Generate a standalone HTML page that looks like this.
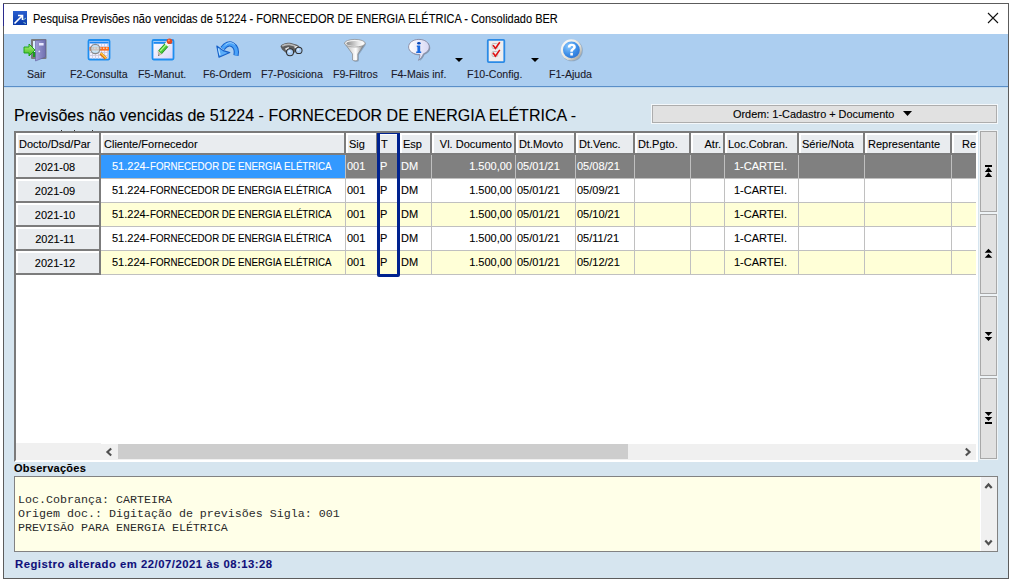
<!DOCTYPE html><html><head><meta charset="utf-8"><style>
*{margin:0;padding:0;box-sizing:border-box}
html,body{width:1012px;height:583px;overflow:hidden;background:#fff;font-family:"Liberation Sans",sans-serif;}
.a{position:absolute}
.t{position:absolute;white-space:nowrap;font-size:11px;line-height:13px;color:#000;-webkit-text-stroke:0.1px currentColor}
</style></head><body>

<div class="a" style="left:3px;top:3px;width:1006px;height:576px;border:1px solid #5c5c5c;background:#d6e5ef"></div>
<div class="a" style="left:3px;top:4px;width:1px;height:22px;background:#2b2b8c"></div>
<div class="a" style="left:4px;top:4px;width:1004px;height:30px;background:#fff"></div>
<div class="a" style="left:13px;top:11px;width:14px;height:14px;background:linear-gradient(#2a5fd0,#0a3aa8)"></div>
<svg class="a" style="left:13px;top:11px" width="14" height="14"><path d="M1.5 12.5 L9 5 M5 4.5 H9.5 V9" stroke="#fff" stroke-width="1.6" fill="none"/><path d="M10 9 l3 -2 M10.5 11.5 l2.5 1" stroke="#9cc" stroke-width="1"/></svg>
<div class="t" style="left:33px;top:13px;font-size:12px;color:#000;transform:scaleX(0.917);transform-origin:0 0">Pesquisa Previsões não vencidas de 51224 - FORNECEDOR DE ENERGIA ELÉTRICA - Consolidado BER</div>
<svg class="a" style="left:987px;top:12px" width="12" height="12"><path d="M1 1 L11 11 M11 1 L1 11" stroke="#111" stroke-width="1.1"/></svg>
<div class="a" style="left:4px;top:34px;width:1004px;height:52px;background:#accef0"></div>
<div class="a" style="left:4px;top:86px;width:1004px;height:1px;background:#5a8fc8"></div>
<div class="a" style="left:4px;top:87px;width:1004px;height:1px;background:#c4daec"></div>
<div class="t" style="left:27px;top:68px;font-size:10.6px;color:#1a1a2a">Sair</div>
<div class="t" style="left:70px;top:68px;font-size:10.6px;color:#1a1a2a">F2-Consulta</div>
<div class="t" style="left:138px;top:68px;font-size:10.6px;color:#1a1a2a">F5-Manut.</div>
<div class="t" style="left:203px;top:68px;font-size:10.6px;color:#1a1a2a">F6-Ordem</div>
<div class="t" style="left:261px;top:68px;font-size:10.6px;color:#1a1a2a">F7-Posiciona</div>
<div class="t" style="left:333px;top:68px;font-size:10.6px;color:#1a1a2a">F9-Filtros</div>
<div class="t" style="left:391px;top:68px;font-size:10.6px;color:#1a1a2a">F4-Mais inf.</div>
<div class="t" style="left:467px;top:68px;font-size:10.6px;color:#1a1a2a">F10-Config.</div>
<div class="t" style="left:549px;top:68px;font-size:10.6px;color:#1a1a2a">F1-Ajuda</div>
<svg class="a" style="left:20px;top:36px" width="30" height="28" viewBox="0 0 30 28">
<defs><linearGradient id="dg" x1="0" x2="1"><stop offset="0" stop-color="#9e9ed8"/><stop offset="1" stop-color="#7070b0"/></linearGradient>
<linearGradient id="ag" x1="0" x2="0" y1="0" y2="1"><stop offset="0" stop-color="#b4f27a"/><stop offset="1" stop-color="#3cb81e"/></linearGradient></defs>
<rect x="11" y="3" width="15.5" height="20" rx="1" fill="#7a7a7a"/>
<rect x="13" y="5" width="3" height="16" fill="#d8f0ff"/>
<rect x="13" y="16" width="3" height="5" fill="#1a9a20"/>
<path d="M15.5 4.6 L25.5 3.8 V21 L15.5 25 Z" fill="url(#dg)" stroke="#6060a0" stroke-width="0.6"/>
<rect x="19" y="7" width="4.6" height="2.5" fill="#e8e8ff"/>
<circle cx="19.3" cy="15.4" r="0.9" fill="#e0e0f0"/>
<path d="M4 11 H9 V8 L15 14 L9 20 V17 H4 Z" fill="url(#ag)" stroke="#12a012" stroke-width="0.9"/>
</svg>
<svg class="a" style="left:85px;top:36px" width="30" height="28" viewBox="0 0 30 28">
<rect x="3.5" y="4" width="21" height="19.5" rx="1.2" fill="#f4f0ff" stroke="#1e8ef0" stroke-width="1.8"/>
<rect x="4.5" y="5.5" width="19" height="2" fill="#1e88f0"/>
<path d="M4.5 10.5 H24 M4.5 13.5 H24 M4.5 16.5 H24 M4.5 19.5 H24 M7.5 8 V23 M10.5 8 V23 M13.5 8 V23 M16.5 8 V23 M19.5 8 V23 M22.5 8 V23" stroke="#c8c8dc" stroke-width="0.8"/>
<rect x="4.5" y="11" width="19.5" height="3.6" fill="#ff6a1a"/>
<path d="M6 12.2 h1.5 M9 12.2 h1.5 M12 12.2 h1.5 M15 12.2 h1.5 M18 12.2 h1.5 M21 12.2 h1.5" stroke="#ffd0a0" stroke-width="1.5"/>
<circle cx="10.3" cy="13" r="4.6" fill="#bfe4f8" fill-opacity="0.75" stroke="#8a8a8a" stroke-width="1.1"/>
<path d="M15.5 17.3 L21 22.6" stroke="#e07010" stroke-width="3"/>
<path d="M15.8 17 L21.2 22.2" stroke="#ffd040" stroke-width="1.2"/>
</svg>
<svg class="a" style="left:149px;top:36px" width="30" height="28" viewBox="0 0 30 28">
<defs><linearGradient id="wg" x1="0" x2="1" y1="0" y2="1"><stop offset="0" stop-color="#ffffff"/><stop offset="1" stop-color="#d8d4f8"/></linearGradient>
<linearGradient id="pg" x1="0" x2="1" y1="0" y2="0"><stop offset="0" stop-color="#2aa02a"/><stop offset="0.5" stop-color="#90f060"/><stop offset="1" stop-color="#2a9a2a"/></linearGradient></defs>
<rect x="3.5" y="4" width="21" height="19.5" rx="1.2" fill="url(#wg)" stroke="#1e8ef0" stroke-width="1.8"/>
<rect x="4.5" y="5.6" width="19" height="2.2" fill="#1e88f0"/>
<path d="M11 16.3 L18.8 7.6" stroke="#1f8a1f" stroke-width="5"/>
<path d="M11 16.3 L18.8 7.6" stroke="#4cc83a" stroke-width="3.6"/>
<path d="M11.2 15.2 L18.2 7.4" stroke="#b0ff90" stroke-width="1.2"/>
<path d="M8.6 14.8 L12.8 18.4 L9.3 19.9 Z" fill="#c8b8a0"/>
<path d="M9.1 18.6 L9.3 19.9 L10.5 19.3 Z" fill="#505050"/>
<path d="M17.4 9.4 L20.2 6.3" stroke="#f4f4f4" stroke-width="5"/>
<circle cx="20.5" cy="5.3" r="2.8" fill="#e24a22"/>
<circle cx="19.9" cy="4.6" r="1" fill="#ff9060"/>
</svg>
<svg class="a" style="left:213px;top:36px" width="30" height="28" viewBox="0 0 30 28">
<path d="M23 19.5 C25 9 16 3.5 9.5 12.5" stroke="#1660c8" stroke-width="5.2" fill="none"/>
<path d="M23 19.5 C25 9 16 3.5 9.5 12.5" stroke="#4aa2f8" stroke-width="3.2" fill="none"/>
<path d="M21.5 8.5 C19 6 15 6 12 9.5" stroke="#a8d8ff" stroke-width="1" fill="none"/>
<path d="M3.8 10 L10.2 14.6 L16.8 16.6 L6 21.2 Z" fill="#5aacf8" stroke="#1660c8" stroke-width="1.1" stroke-linejoin="round"/>
<path d="M5.5 12.5 L7 19" stroke="#b8e0ff" stroke-width="1.2"/>
</svg>
<svg class="a" style="left:277px;top:36px" width="30" height="28" viewBox="0 0 30 28">
<path d="M3.5 10.5 C4.5 7.5 10 6.5 13 6.8 L20 8.8 C22.5 10 23.5 12 22.5 14 L12 19.5 L5 13.5 Z" fill="#5c5c5c"/>
<path d="M5.2 10.2 C7 8.8 10 8.2 12.5 8.4 L18.5 10" stroke="#b8b8b8" stroke-width="1.6" fill="none"/>
<path d="M8.5 13.5 L12 11.8 M17.5 11.5 L20.5 10.8" stroke="#e8e8e8" stroke-width="2"/>
<circle cx="13" cy="16.2" r="4" fill="#303030"/>
<circle cx="21.8" cy="14.4" r="3.7" fill="#303030"/>
<circle cx="13" cy="16.2" r="3" fill="#a8ccf4"/>
<circle cx="21.8" cy="14.4" r="2.7" fill="#a8ccf4"/>
<circle cx="12.4" cy="15.4" r="1.2" fill="#e0f0ff"/>
<circle cx="21.2" cy="13.7" r="1.1" fill="#e0f0ff"/>
</svg>
<svg class="a" style="left:341px;top:36px" width="30" height="28" viewBox="0 0 30 28">
<defs><linearGradient id="fg" x1="0" x2="1"><stop offset="0" stop-color="#b0b0b0"/><stop offset="0.55" stop-color="#ffffff"/><stop offset="1" stop-color="#6a6a6a"/></linearGradient>
<linearGradient id="fi" x1="0" x2="1"><stop offset="0" stop-color="#8a8a8a"/><stop offset="0.7" stop-color="#e8e8e8"/><stop offset="1" stop-color="#ffffff"/></linearGradient></defs>
<path d="M4.5 8.2 L12.5 19 V25 C13.5 26 17 26 17.8 25 V19 L25.2 8.2 Z" fill="#000" fill-opacity="0.2"/>
<path d="M3.5 7.2 L11.5 18 V24 C12.5 25 16 25 16.8 24 V18 L24.2 7.2 Z" fill="url(#fg)" stroke="#7a7a7a" stroke-width="0.6"/>
<ellipse cx="13.9" cy="7.2" rx="10.3" ry="3.8" fill="#f4f4f4" stroke="#8a8a8a" stroke-width="0.7"/>
<ellipse cx="13.9" cy="7.5" rx="8.6" ry="2.6" fill="url(#fi)"/>
</svg>
<svg class="a" style="left:405px;top:36px" width="30" height="28" viewBox="0 0 30 28">
<defs><linearGradient id="bg2" x1="0" x2="1"><stop offset="0" stop-color="#ffffff"/><stop offset="1" stop-color="#d8d8f4"/></linearGradient></defs>
<path transform="translate(1,1)" fill="#000" fill-opacity="0.25" d="M13.9 3.4 C20 3.4 24.3 6.8 24.3 11 C24.3 14 22 16.5 18.5 17.8 C17.5 20 16 22.5 13.5 24.3 C14.5 22 15 20 14.8 18.5 C8 18.6 3.6 15 3.6 11 C3.6 6.8 8 3.4 13.9 3.4 Z"/>
<path d="M13.9 3.4 C20 3.4 24.3 6.8 24.3 11 C24.3 14 22 16.5 18.5 17.8 C17.5 20 16 22.5 13.5 24.3 C14.5 22 15 20 14.8 18.5 C8 18.6 3.6 15 3.6 11 C3.6 6.8 8 3.4 13.9 3.4 Z" fill="url(#bg2)" stroke="#8888a0" stroke-width="0.9"/>
<ellipse cx="13.9" cy="7.2" rx="1.8" ry="1.2" fill="#0a4ab8"/>
<path d="M11.8 9.6 H15.2 V15.6 H16.2 V17 H11.2 V15.6 H12.4 V11 H11.8 Z" fill="#1a6ae0"/>
</svg>
<svg class="a" style="left:482px;top:36px" width="30" height="28" viewBox="0 0 30 28">
<rect x="5.8" y="3.8" width="16.5" height="22.3" rx="1" fill="#f0eeee" stroke="#2a8ae6" stroke-width="1.8"/>
<rect x="10.2" y="7.5" width="5.5" height="5" rx="1" fill="none" stroke="#b8b8b8" stroke-width="0.9"/>
<rect x="10.2" y="15.5" width="5.5" height="5" rx="1" fill="none" stroke="#b8b8b8" stroke-width="0.9"/>
<path d="M11 9.1 L13.4 12.4 L17.8 6.2" stroke="#e01010" stroke-width="1.6" fill="none"/>
<path d="M11 16.8 L13.4 20.2 L17.8 13.9" stroke="#e01010" stroke-width="1.6" fill="none"/>
</svg>
<svg class="a" style="left:557px;top:36px" width="30" height="28" viewBox="0 0 30 28">
<defs><radialGradient id="hg" cx="0.35" cy="0.3" r="0.8"><stop offset="0" stop-color="#8ccaff"/><stop offset="0.6" stop-color="#3c8ee8"/><stop offset="1" stop-color="#2a70d0"/></radialGradient>
<linearGradient id="rg" x1="0" y1="0" x2="1" y2="1"><stop offset="0" stop-color="#ffffff"/><stop offset="0.6" stop-color="#e4e2da"/><stop offset="1" stop-color="#8a8a86"/></linearGradient></defs>
<circle cx="15" cy="14.5" r="10.8" fill="#000" fill-opacity="0.18"/>
<circle cx="14.4" cy="13.9" r="10.6" fill="url(#rg)"/>
<circle cx="14.4" cy="13.9" r="8.4" fill="url(#hg)"/>
<path d="M10.8 11.4 C10.8 8.6 12.8 7.8 14.8 7.8 C17 7.8 18.8 9 18.8 11 C18.8 13.4 16 13.6 15.8 15.8 H13.3 C13.2 12.6 16.2 12.4 16.2 11.1 C16.2 10.3 15.6 9.9 14.8 9.9 C13.9 9.9 13.4 10.5 13.4 11.4 Z" fill="#fff"/>
<rect x="13.3" y="16.8" width="2.6" height="2.7" fill="#fff"/>
</svg>
<svg class="a" style="left:455px;top:58px" width="8" height="4"><path d="M0 0 H8 L4 4 Z" fill="#000"/></svg>
<svg class="a" style="left:531px;top:58px" width="8" height="4"><path d="M0 0 H8 L4 4 Z" fill="#000"/></svg>
<div class="t" style="left:14px;top:106px;font-size:16px;line-height:19px;color:#000">Previsões não vencidas de 51224 - FORNECEDOR DE ENERGIA ELÉTRICA -</div>
<div class="a" style="left:61px;top:130px;width:1px;height:1px;background:#333"></div>
<div class="a" style="left:74px;top:130px;width:1px;height:1px;background:#333"></div>
<div class="a" style="left:92px;top:130px;width:1px;height:1px;background:#333"></div>
<div class="a" style="left:651px;top:104px;width:347px;height:20px;border:1px solid #f4f8fb;"></div>
<div class="a" style="left:652px;top:105px;width:345px;height:18px;border:1px solid #adadad;background:#e1e1e1"></div>
<div class="t" style="left:733px;top:108px;font-size:10.9px;color:#000">Ordem: 1-Cadastro + Documento</div>
<svg class="a" style="left:903px;top:111px" width="9" height="5"><path d="M0 0 H9 L4.5 5 Z" fill="#000"/></svg>
<div class="a" style="left:14px;top:131px;width:964px;height:331px;background:#fff;border-top:2px solid #7a7a7a;border-left:2px solid #7a7a7a;border-right:2px solid #fff;border-bottom:2px solid #fff;overflow:hidden">
<div class="a" style="left:0px;top:0px;width:85px;height:22px;background:#e9ecef"></div>
<div class="a" style="left:0px;top:0px;width:83px;height:2px;background:#fff"></div>
<div class="a" style="left:0px;top:0px;width:2px;height:20px;background:#fff"></div>
<div class="a" style="left:83px;top:0px;width:2px;height:22px;background:#7c7c7c"></div>
<div class="a" style="left:85px;top:0px;width:245px;height:22px;background:#e9ecef"></div>
<div class="a" style="left:85px;top:0px;width:243px;height:2px;background:#fff"></div>
<div class="a" style="left:85px;top:0px;width:2px;height:20px;background:#fff"></div>
<div class="a" style="left:328px;top:0px;width:2px;height:22px;background:#7c7c7c"></div>
<div class="a" style="left:330px;top:0px;width:32px;height:22px;background:#e9ecef"></div>
<div class="a" style="left:330px;top:0px;width:30px;height:2px;background:#fff"></div>
<div class="a" style="left:330px;top:0px;width:2px;height:20px;background:#fff"></div>
<div class="a" style="left:360px;top:0px;width:2px;height:22px;background:#7c7c7c"></div>
<div class="a" style="left:362px;top:0px;width:22px;height:22px;background:#e9ecef"></div>
<div class="a" style="left:362px;top:0px;width:20px;height:2px;background:#fff"></div>
<div class="a" style="left:362px;top:0px;width:2px;height:20px;background:#fff"></div>
<div class="a" style="left:382px;top:0px;width:2px;height:22px;background:#7c7c7c"></div>
<div class="a" style="left:384px;top:0px;width:32px;height:22px;background:#e9ecef"></div>
<div class="a" style="left:384px;top:0px;width:30px;height:2px;background:#fff"></div>
<div class="a" style="left:384px;top:0px;width:2px;height:20px;background:#fff"></div>
<div class="a" style="left:414px;top:0px;width:2px;height:22px;background:#7c7c7c"></div>
<div class="a" style="left:416px;top:0px;width:84px;height:22px;background:#e9ecef"></div>
<div class="a" style="left:416px;top:0px;width:82px;height:2px;background:#fff"></div>
<div class="a" style="left:416px;top:0px;width:2px;height:20px;background:#fff"></div>
<div class="a" style="left:498px;top:0px;width:2px;height:22px;background:#7c7c7c"></div>
<div class="a" style="left:500px;top:0px;width:60px;height:22px;background:#e9ecef"></div>
<div class="a" style="left:500px;top:0px;width:58px;height:2px;background:#fff"></div>
<div class="a" style="left:500px;top:0px;width:2px;height:20px;background:#fff"></div>
<div class="a" style="left:558px;top:0px;width:2px;height:22px;background:#7c7c7c"></div>
<div class="a" style="left:560px;top:0px;width:59px;height:22px;background:#e9ecef"></div>
<div class="a" style="left:560px;top:0px;width:57px;height:2px;background:#fff"></div>
<div class="a" style="left:560px;top:0px;width:2px;height:20px;background:#fff"></div>
<div class="a" style="left:617px;top:0px;width:2px;height:22px;background:#7c7c7c"></div>
<div class="a" style="left:619px;top:0px;width:56px;height:22px;background:#e9ecef"></div>
<div class="a" style="left:619px;top:0px;width:54px;height:2px;background:#fff"></div>
<div class="a" style="left:619px;top:0px;width:2px;height:20px;background:#fff"></div>
<div class="a" style="left:673px;top:0px;width:2px;height:22px;background:#7c7c7c"></div>
<div class="a" style="left:675px;top:0px;width:34px;height:22px;background:#e9ecef"></div>
<div class="a" style="left:675px;top:0px;width:32px;height:2px;background:#fff"></div>
<div class="a" style="left:675px;top:0px;width:2px;height:20px;background:#fff"></div>
<div class="a" style="left:707px;top:0px;width:2px;height:22px;background:#7c7c7c"></div>
<div class="a" style="left:709px;top:0px;width:74px;height:22px;background:#e9ecef"></div>
<div class="a" style="left:709px;top:0px;width:72px;height:2px;background:#fff"></div>
<div class="a" style="left:709px;top:0px;width:2px;height:20px;background:#fff"></div>
<div class="a" style="left:781px;top:0px;width:2px;height:22px;background:#7c7c7c"></div>
<div class="a" style="left:783px;top:0px;width:66px;height:22px;background:#e9ecef"></div>
<div class="a" style="left:783px;top:0px;width:64px;height:2px;background:#fff"></div>
<div class="a" style="left:783px;top:0px;width:2px;height:20px;background:#fff"></div>
<div class="a" style="left:847px;top:0px;width:2px;height:22px;background:#7c7c7c"></div>
<div class="a" style="left:849px;top:0px;width:87px;height:22px;background:#e9ecef"></div>
<div class="a" style="left:849px;top:0px;width:85px;height:2px;background:#fff"></div>
<div class="a" style="left:849px;top:0px;width:2px;height:20px;background:#fff"></div>
<div class="a" style="left:934px;top:0px;width:2px;height:22px;background:#7c7c7c"></div>
<div class="a" style="left:936px;top:0px;width:89px;height:22px;background:#e9ecef"></div>
<div class="a" style="left:936px;top:0px;width:87px;height:2px;background:#fff"></div>
<div class="a" style="left:936px;top:0px;width:2px;height:20px;background:#fff"></div>
<div class="a" style="left:1023px;top:0px;width:2px;height:22px;background:#7c7c7c"></div>
<div class="a" style="left:0px;top:20px;width:1000px;height:2px;background:#7c7c7c"></div>
<div class="t" style="left:3px;top:5px;">Docto/Dsd/Par</div>
<div class="t" style="left:88px;top:5px;">Cliente/Fornecedor</div>
<div class="t" style="left:333px;top:5px;">Sig</div>
<div class="t" style="left:365px;top:5px;">T</div>
<div class="t" style="left:387px;top:5px;">Esp</div>
<div class="t" style="left:416px;top:5px;width:80px;text-align:right">Vl. Documento</div>
<div class="t" style="left:503px;top:5px;">Dt.Movto</div>
<div class="t" style="left:563px;top:5px;">Dt.Venc.</div>
<div class="t" style="left:622px;top:5px;">Dt.Pgto.</div>
<div class="t" style="left:675px;top:5px;width:30px;text-align:right">Atr.</div>
<div class="t" style="left:712px;top:5px;">Loc.Cobran.</div>
<div class="t" style="left:786px;top:5px;">Série/Nota</div>
<div class="t" style="left:852px;top:5px;">Representante</div>
<div class="t" style="left:946px;top:5px;">Re</div>
<div class="a" style="left:0px;top:22px;width:85px;height:24px;background:#e9ecef"></div>
<div class="a" style="left:0px;top:22px;width:83px;height:2px;background:#fff"></div>
<div class="a" style="left:0px;top:22px;width:2px;height:22px;background:#fff"></div>
<div class="a" style="left:83px;top:21px;width:2px;height:25px;background:#7c7c7c"></div>
<div class="a" style="left:0px;top:44px;width:85px;height:2px;background:#7c7c7c"></div>
<div class="t" style="left:0px;top:28px;width:78px;text-align:center">2021-08</div>
<div class="a" style="left:85px;top:22px;width:1000px;height:23px;background:#808080"></div>
<div class="a" style="left:85px;top:22px;width:244px;height:23px;background:#3399ff"></div>
<div class="a" style="left:329px;top:22px;width:1px;height:24px;background:#c0c0c0"></div>
<div class="a" style="left:361px;top:22px;width:1px;height:24px;background:#c0c0c0"></div>
<div class="a" style="left:383px;top:22px;width:1px;height:24px;background:#c0c0c0"></div>
<div class="a" style="left:415px;top:22px;width:1px;height:24px;background:#c0c0c0"></div>
<div class="a" style="left:499px;top:22px;width:1px;height:24px;background:#c0c0c0"></div>
<div class="a" style="left:559px;top:22px;width:1px;height:24px;background:#c0c0c0"></div>
<div class="a" style="left:618px;top:22px;width:1px;height:24px;background:#c0c0c0"></div>
<div class="a" style="left:674px;top:22px;width:1px;height:24px;background:#c0c0c0"></div>
<div class="a" style="left:708px;top:22px;width:1px;height:24px;background:#c0c0c0"></div>
<div class="a" style="left:782px;top:22px;width:1px;height:24px;background:#c0c0c0"></div>
<div class="a" style="left:848px;top:22px;width:1px;height:24px;background:#c0c0c0"></div>
<div class="a" style="left:935px;top:22px;width:1px;height:24px;background:#c0c0c0"></div>
<div class="a" style="left:1024px;top:22px;width:1px;height:24px;background:#c0c0c0"></div>
<div class="a" style="left:85px;top:45px;width:1000px;height:1px;background:#c0c0c0"></div>
<div class="t" style="left:96px;top:27px;color:#fff;">51.224-</div>
<div class="t" style="left:134px;top:27px;color:#fff;transform:scaleX(0.884);transform-origin:0 0">FORNECEDOR DE ENERGIA ELÉTRICA</div>
<div class="t" style="left:331px;top:27px;color:#fff;">001</div>
<div class="t" style="left:364px;top:27px;color:#fff;">P</div>
<div class="t" style="left:385px;top:27px;color:#fff;">DM</div>
<div class="t" style="left:416px;top:27px;width:80px;text-align:right;color:#fff;">1.500,00</div>
<div class="t" style="left:501px;top:27px;color:#fff;">05/01/21</div>
<div class="t" style="left:561px;top:27px;color:#fff;">05/08/21</div>
<div class="t" style="left:718px;top:27px;color:#fff;">1-CARTEI.</div>
<div class="a" style="left:0px;top:46px;width:85px;height:24px;background:#e9ecef"></div>
<div class="a" style="left:0px;top:46px;width:83px;height:2px;background:#fff"></div>
<div class="a" style="left:0px;top:46px;width:2px;height:22px;background:#fff"></div>
<div class="a" style="left:83px;top:45px;width:2px;height:25px;background:#7c7c7c"></div>
<div class="a" style="left:0px;top:68px;width:85px;height:2px;background:#7c7c7c"></div>
<div class="t" style="left:0px;top:52px;width:78px;text-align:center">2021-09</div>
<div class="a" style="left:85px;top:46px;width:1000px;height:23px;background:#ffffff"></div>
<div class="a" style="left:329px;top:46px;width:1px;height:24px;background:#c0c0c0"></div>
<div class="a" style="left:361px;top:46px;width:1px;height:24px;background:#c0c0c0"></div>
<div class="a" style="left:383px;top:46px;width:1px;height:24px;background:#c0c0c0"></div>
<div class="a" style="left:415px;top:46px;width:1px;height:24px;background:#c0c0c0"></div>
<div class="a" style="left:499px;top:46px;width:1px;height:24px;background:#c0c0c0"></div>
<div class="a" style="left:559px;top:46px;width:1px;height:24px;background:#c0c0c0"></div>
<div class="a" style="left:618px;top:46px;width:1px;height:24px;background:#c0c0c0"></div>
<div class="a" style="left:674px;top:46px;width:1px;height:24px;background:#c0c0c0"></div>
<div class="a" style="left:708px;top:46px;width:1px;height:24px;background:#c0c0c0"></div>
<div class="a" style="left:782px;top:46px;width:1px;height:24px;background:#c0c0c0"></div>
<div class="a" style="left:848px;top:46px;width:1px;height:24px;background:#c0c0c0"></div>
<div class="a" style="left:935px;top:46px;width:1px;height:24px;background:#c0c0c0"></div>
<div class="a" style="left:1024px;top:46px;width:1px;height:24px;background:#c0c0c0"></div>
<div class="a" style="left:85px;top:69px;width:1000px;height:1px;background:#c0c0c0"></div>
<div class="t" style="left:96px;top:51px;color:#000;">51.224-</div>
<div class="t" style="left:134px;top:51px;color:#000;transform:scaleX(0.884);transform-origin:0 0">FORNECEDOR DE ENERGIA ELÉTRICA</div>
<div class="t" style="left:331px;top:51px;color:#000;">001</div>
<div class="t" style="left:364px;top:51px;color:#000;">P</div>
<div class="t" style="left:385px;top:51px;color:#000;">DM</div>
<div class="t" style="left:416px;top:51px;width:80px;text-align:right;color:#000;">1.500,00</div>
<div class="t" style="left:501px;top:51px;color:#000;">05/01/21</div>
<div class="t" style="left:561px;top:51px;color:#000;">05/09/21</div>
<div class="t" style="left:718px;top:51px;color:#000;">1-CARTEI.</div>
<div class="a" style="left:0px;top:70px;width:85px;height:24px;background:#e9ecef"></div>
<div class="a" style="left:0px;top:70px;width:83px;height:2px;background:#fff"></div>
<div class="a" style="left:0px;top:70px;width:2px;height:22px;background:#fff"></div>
<div class="a" style="left:83px;top:69px;width:2px;height:25px;background:#7c7c7c"></div>
<div class="a" style="left:0px;top:92px;width:85px;height:2px;background:#7c7c7c"></div>
<div class="t" style="left:0px;top:76px;width:78px;text-align:center">2021-10</div>
<div class="a" style="left:85px;top:70px;width:1000px;height:23px;background:#ffffd7"></div>
<div class="a" style="left:329px;top:70px;width:1px;height:24px;background:#c0c0c0"></div>
<div class="a" style="left:361px;top:70px;width:1px;height:24px;background:#c0c0c0"></div>
<div class="a" style="left:383px;top:70px;width:1px;height:24px;background:#c0c0c0"></div>
<div class="a" style="left:415px;top:70px;width:1px;height:24px;background:#c0c0c0"></div>
<div class="a" style="left:499px;top:70px;width:1px;height:24px;background:#c0c0c0"></div>
<div class="a" style="left:559px;top:70px;width:1px;height:24px;background:#c0c0c0"></div>
<div class="a" style="left:618px;top:70px;width:1px;height:24px;background:#c0c0c0"></div>
<div class="a" style="left:674px;top:70px;width:1px;height:24px;background:#c0c0c0"></div>
<div class="a" style="left:708px;top:70px;width:1px;height:24px;background:#c0c0c0"></div>
<div class="a" style="left:782px;top:70px;width:1px;height:24px;background:#c0c0c0"></div>
<div class="a" style="left:848px;top:70px;width:1px;height:24px;background:#c0c0c0"></div>
<div class="a" style="left:935px;top:70px;width:1px;height:24px;background:#c0c0c0"></div>
<div class="a" style="left:1024px;top:70px;width:1px;height:24px;background:#c0c0c0"></div>
<div class="a" style="left:85px;top:93px;width:1000px;height:1px;background:#c0c0c0"></div>
<div class="t" style="left:96px;top:75px;color:#000;">51.224-</div>
<div class="t" style="left:134px;top:75px;color:#000;transform:scaleX(0.884);transform-origin:0 0">FORNECEDOR DE ENERGIA ELÉTRICA</div>
<div class="t" style="left:331px;top:75px;color:#000;">001</div>
<div class="t" style="left:364px;top:75px;color:#000;">P</div>
<div class="t" style="left:385px;top:75px;color:#000;">DM</div>
<div class="t" style="left:416px;top:75px;width:80px;text-align:right;color:#000;">1.500,00</div>
<div class="t" style="left:501px;top:75px;color:#000;">05/01/21</div>
<div class="t" style="left:561px;top:75px;color:#000;">05/10/21</div>
<div class="t" style="left:718px;top:75px;color:#000;">1-CARTEI.</div>
<div class="a" style="left:0px;top:94px;width:85px;height:24px;background:#e9ecef"></div>
<div class="a" style="left:0px;top:94px;width:83px;height:2px;background:#fff"></div>
<div class="a" style="left:0px;top:94px;width:2px;height:22px;background:#fff"></div>
<div class="a" style="left:83px;top:93px;width:2px;height:25px;background:#7c7c7c"></div>
<div class="a" style="left:0px;top:116px;width:85px;height:2px;background:#7c7c7c"></div>
<div class="t" style="left:0px;top:100px;width:78px;text-align:center">2021-11</div>
<div class="a" style="left:85px;top:94px;width:1000px;height:23px;background:#ffffff"></div>
<div class="a" style="left:329px;top:94px;width:1px;height:24px;background:#c0c0c0"></div>
<div class="a" style="left:361px;top:94px;width:1px;height:24px;background:#c0c0c0"></div>
<div class="a" style="left:383px;top:94px;width:1px;height:24px;background:#c0c0c0"></div>
<div class="a" style="left:415px;top:94px;width:1px;height:24px;background:#c0c0c0"></div>
<div class="a" style="left:499px;top:94px;width:1px;height:24px;background:#c0c0c0"></div>
<div class="a" style="left:559px;top:94px;width:1px;height:24px;background:#c0c0c0"></div>
<div class="a" style="left:618px;top:94px;width:1px;height:24px;background:#c0c0c0"></div>
<div class="a" style="left:674px;top:94px;width:1px;height:24px;background:#c0c0c0"></div>
<div class="a" style="left:708px;top:94px;width:1px;height:24px;background:#c0c0c0"></div>
<div class="a" style="left:782px;top:94px;width:1px;height:24px;background:#c0c0c0"></div>
<div class="a" style="left:848px;top:94px;width:1px;height:24px;background:#c0c0c0"></div>
<div class="a" style="left:935px;top:94px;width:1px;height:24px;background:#c0c0c0"></div>
<div class="a" style="left:1024px;top:94px;width:1px;height:24px;background:#c0c0c0"></div>
<div class="a" style="left:85px;top:117px;width:1000px;height:1px;background:#c0c0c0"></div>
<div class="t" style="left:96px;top:99px;color:#000;">51.224-</div>
<div class="t" style="left:134px;top:99px;color:#000;transform:scaleX(0.884);transform-origin:0 0">FORNECEDOR DE ENERGIA ELÉTRICA</div>
<div class="t" style="left:331px;top:99px;color:#000;">001</div>
<div class="t" style="left:364px;top:99px;color:#000;">P</div>
<div class="t" style="left:385px;top:99px;color:#000;">DM</div>
<div class="t" style="left:416px;top:99px;width:80px;text-align:right;color:#000;">1.500,00</div>
<div class="t" style="left:501px;top:99px;color:#000;">05/01/21</div>
<div class="t" style="left:561px;top:99px;color:#000;">05/11/21</div>
<div class="t" style="left:718px;top:99px;color:#000;">1-CARTEI.</div>
<div class="a" style="left:0px;top:118px;width:85px;height:24px;background:#e9ecef"></div>
<div class="a" style="left:0px;top:118px;width:83px;height:2px;background:#fff"></div>
<div class="a" style="left:0px;top:118px;width:2px;height:22px;background:#fff"></div>
<div class="a" style="left:83px;top:117px;width:2px;height:25px;background:#7c7c7c"></div>
<div class="a" style="left:0px;top:140px;width:85px;height:2px;background:#7c7c7c"></div>
<div class="t" style="left:0px;top:124px;width:78px;text-align:center">2021-12</div>
<div class="a" style="left:85px;top:118px;width:1000px;height:23px;background:#ffffd7"></div>
<div class="a" style="left:329px;top:118px;width:1px;height:24px;background:#c0c0c0"></div>
<div class="a" style="left:361px;top:118px;width:1px;height:24px;background:#c0c0c0"></div>
<div class="a" style="left:383px;top:118px;width:1px;height:24px;background:#c0c0c0"></div>
<div class="a" style="left:415px;top:118px;width:1px;height:24px;background:#c0c0c0"></div>
<div class="a" style="left:499px;top:118px;width:1px;height:24px;background:#c0c0c0"></div>
<div class="a" style="left:559px;top:118px;width:1px;height:24px;background:#c0c0c0"></div>
<div class="a" style="left:618px;top:118px;width:1px;height:24px;background:#c0c0c0"></div>
<div class="a" style="left:674px;top:118px;width:1px;height:24px;background:#c0c0c0"></div>
<div class="a" style="left:708px;top:118px;width:1px;height:24px;background:#c0c0c0"></div>
<div class="a" style="left:782px;top:118px;width:1px;height:24px;background:#c0c0c0"></div>
<div class="a" style="left:848px;top:118px;width:1px;height:24px;background:#c0c0c0"></div>
<div class="a" style="left:935px;top:118px;width:1px;height:24px;background:#c0c0c0"></div>
<div class="a" style="left:1024px;top:118px;width:1px;height:24px;background:#c0c0c0"></div>
<div class="a" style="left:85px;top:141px;width:1000px;height:1px;background:#c0c0c0"></div>
<div class="t" style="left:96px;top:123px;color:#000;">51.224-</div>
<div class="t" style="left:134px;top:123px;color:#000;transform:scaleX(0.884);transform-origin:0 0">FORNECEDOR DE ENERGIA ELÉTRICA</div>
<div class="t" style="left:331px;top:123px;color:#000;">001</div>
<div class="t" style="left:364px;top:123px;color:#000;">P</div>
<div class="t" style="left:385px;top:123px;color:#000;">DM</div>
<div class="t" style="left:416px;top:123px;width:80px;text-align:right;color:#000;">1.500,00</div>
<div class="t" style="left:501px;top:123px;color:#000;">05/01/21</div>
<div class="t" style="left:561px;top:123px;color:#000;">05/12/21</div>
<div class="t" style="left:718px;top:123px;color:#000;">1-CARTEI.</div>
<div class="a" style="left:361px;top:-2px;width:23px;height:146px;border:3px solid #00228f;border-radius:2px"></div>
<div class="a" style="left:0px;top:310px;width:85px;height:17px;background:#f0f0f0"></div>
<div class="a" style="left:85px;top:311px;width:875px;height:16px;background:#f0f0f0"></div>
<div class="a" style="left:102px;top:311px;width:510px;height:15px;background:#cdcdcd"></div>
<svg class="a" style="left:89px;top:314px" width="8" height="10"><path d="M6.2 1.4 L2.4 4.9 L6.2 8.4" stroke="#505050" stroke-width="2.1" fill="none"/></svg>
<svg class="a" style="left:948px;top:314px" width="8" height="10"><path d="M1.8 1.4 L5.6 4.9 L1.8 8.4" stroke="#505050" stroke-width="2.1" fill="none"/></svg>
</div>
<div class="a" style="left:979px;top:130px;width:19px;height:83px;border:1px solid #eef3f6"></div>
<div class="a" style="left:980px;top:131px;width:17px;height:81px;border:1px solid #a8a8a8;background:#e1e1e1"></div>
<div class="a" style="left:979px;top:213px;width:19px;height:82px;border:1px solid #eef3f6"></div>
<div class="a" style="left:980px;top:214px;width:17px;height:80px;border:1px solid #a8a8a8;background:#e1e1e1"></div>
<div class="a" style="left:979px;top:295px;width:19px;height:82px;border:1px solid #eef3f6"></div>
<div class="a" style="left:980px;top:296px;width:17px;height:80px;border:1px solid #a8a8a8;background:#e1e1e1"></div>
<div class="a" style="left:979px;top:377px;width:19px;height:83px;border:1px solid #eef3f6"></div>
<div class="a" style="left:980px;top:378px;width:17px;height:81px;border:1px solid #a8a8a8;background:#e1e1e1"></div>
<svg class="a" style="left:985px;top:165px;overflow:visible" width="7" height="13"><rect x="0" y="0" width="7" height="2" fill="#000"/><path d="M3.5 2.2 L7.2 7 H-0.2 Z M3.5 7.2 L7.2 12 H-0.2 Z" fill="#000"/></svg>
<svg class="a" style="left:985px;top:248px;overflow:visible" width="7" height="13"><path d="M3.5 0.8 L7.3 4.8 H-0.3 Z M3.5 5.8 L7.3 9.8 H-0.3 Z" fill="#000"/></svg>
<svg class="a" style="left:985px;top:331px;overflow:visible" width="7" height="13"><path d="M-0.3 1 H7.3 L3.5 5 Z M-0.3 6 H7.3 L3.5 10 Z" fill="#000"/></svg>
<svg class="a" style="left:985px;top:411px;overflow:visible" width="7" height="13"><path d="M-0.3 1 H7.3 L3.5 5 Z M-0.3 6 H7.3 L3.5 10 Z" fill="#000"/><rect x="0" y="11" width="7" height="2" fill="#000"/></svg>
<div class="t" style="left:14px;top:462px;font-size:11px;letter-spacing:0.27px;font-weight:bold;color:#000">Observações</div>
<div class="a" style="left:14px;top:476px;width:984px;height:76px;border:1px solid #828282;background:#ffffe8"></div>
<div class="a" style="left:980px;top:477px;width:17px;height:74px;background:#f0f0f0;border-left:1px solid #fff"></div>
<svg class="a" style="left:984px;top:482px" width="9" height="8"><path d="M1.3 6 L4.5 2.4 L7.7 6" stroke="#505050" stroke-width="2.2" fill="none"/></svg>
<svg class="a" style="left:984px;top:539px" width="9" height="8"><path d="M1.3 1.6 L4.5 5.2 L7.7 1.6" stroke="#505050" stroke-width="2.2" fill="none"/></svg>
<div class="a" style="left:18px;top:493px;font-family:'Liberation Mono',monospace;font-size:11.67px;line-height:14px;white-space:pre;color:#2a2a2a">Loc.Cobrança: CARTEIRA
Origem doc.: Digitação de previsões Sigla: 001
PREVISÃO PARA ENERGIA ELÉTRICA</div>
<div class="t" style="left:15px;top:558px;font-size:11.3px;letter-spacing:0.5px;font-weight:bold;color:#10107a">Registro alterado em 22/07/2021 às 08:13:28</div>
</body></html>
